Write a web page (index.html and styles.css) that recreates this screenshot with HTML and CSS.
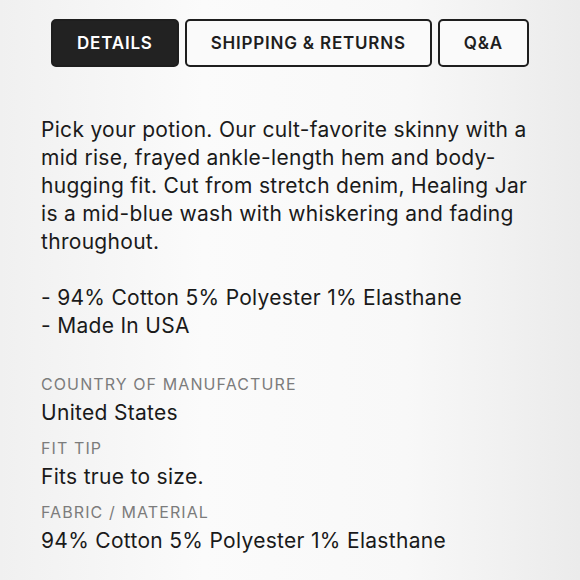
FILE: index.html
```html
<!DOCTYPE html>
<html lang="en">
  <head>
    <meta charset="UTF-8" />
    <title>Product Details</title>
    <link rel="stylesheet" href="styles.css">
  </head>
  <body>
    <div class="tabs">
      <button class="tab active">DETAILS</button>
      <button class="tab">SHIPPING &amp; RETURNS</button>
      <button class="tab">Q&amp;A</button>
    </div>

    <div class="details">
      <p class="description">
        Pick your potion. Our cult-favorite skinny with a mid rise, frayed ankle-length hem and body-hugging fit. Cut from stretch denim, Healing Jar is a mid-blue wash with whiskering and fading throughout.<br><br>
        - 94% Cotton 5% Polyester 1% Elasthane<br>
        - Made In USA
      </p>

      <div class="specs">
        <div class="spec">
          <div class="spec-label">COUNTRY OF MANUFACTURE</div>
          <div class="spec-value">United States</div>
        </div>
        <div class="spec">
          <div class="spec-label">FIT TIP</div>
          <div class="spec-value">Fits true to size.</div>
        </div>
        <div class="spec">
          <div class="spec-label">FABRIC / MATERIAL</div>
          <div class="spec-value">94% Cotton 5% Polyester 1% Elasthane</div>
        </div>
      </div>
    </div>
  </body>
</html>
```

FILE: styles.css
```css
/* General styles */
* {
  box-sizing: border-box;
}

body {
  font-family: Inter, "Liberation Sans", sans-serif;
  margin: 0;
  padding: 0;
  width: 580px;
  height: 580px;
  overflow: hidden;
  color: #1a1a1a;
  background: linear-gradient(to right, #f0f0f0 0%, #fbfbfb 35%, #f8f8f8 70%, #ebebeb 100%);
}

/* Tabs */
.tabs {
  display: flex;
  justify-content: center;
  gap: 6px;
  padding-top: 19px;
}

.tab {
  font-family: inherit;
  font-size: 17px;
  font-weight: 600;
  letter-spacing: 0.8px;
  height: 48px;
  padding: 0 24px;
  border: 2px solid #1e1e1e;
  border-radius: 5px;
  background-color: #fafafa;
  color: #1e1e1e;
  cursor: pointer;
}

.tab.active {
  background-color: #222;
  color: #fff;
}

/* Details */
.details {
  padding: 0 38px 0 41px;
}

.description {
  font-size: 21px;
  line-height: 28px;
  letter-spacing: 0.3px;
  margin: 49px 0 0;
}

.specs {
  display: flex;
  flex-direction: column;
  gap: 7px;
  margin-top: 32px;
}

.spec {
  display: flex;
  flex-direction: column;
  gap: 1px;
}

.spec-label {
  font-size: 16px;
  line-height: 24px;
  letter-spacing: 1.1px;
  color: #7c7c7c;
}

.spec-value {
  font-size: 21px;
  line-height: 32px;
  letter-spacing: 0.3px;
}
```
